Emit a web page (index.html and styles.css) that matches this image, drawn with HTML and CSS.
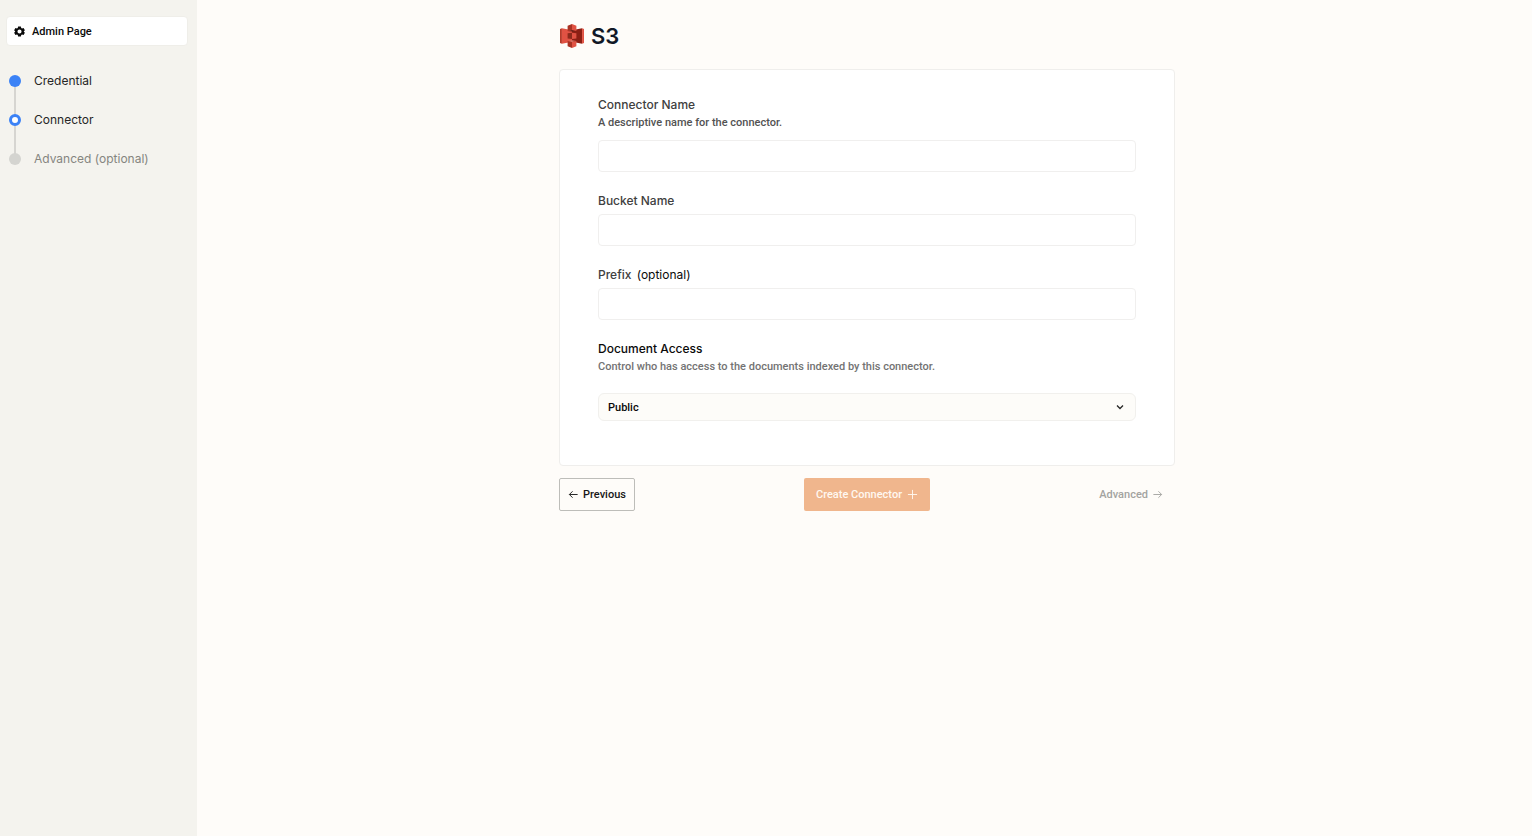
FILE: index.html
```html
<!DOCTYPE html>
<html lang="en">
<head>
<meta charset="utf-8">
<meta name="viewport" content="width=device-width, initial-scale=1">
<title>S3 Connector</title>
<link rel="stylesheet" href="styles.css">
</head>
<body class="page">
<aside class="sidebar">
  <a class="admin-link" href="#">
    <svg class="gear" viewBox="0 0 24 24" aria-hidden="true"><path fill="currentColor" fill-rule="evenodd" d="M9 1h6l.8 3.400 1.700 1 3.400-1 2.800 5-2.500 2.400v.4l2.500 2.400-2.800 5-3.400-1-1.700 1L15 23H9l-.8-3.400-1.700-1-3.400 1-2.800-5 2.500-2.400v-.4L.3 9.400l2.800-5 3.400 1 1.700-1zM12 7.500a4.500 4.500 0 1 0 0 9 4.500 4.500 0 0 0 0-9z"/></svg>
    <span>Admin Page</span>
  </a>
  <ol class="steps">
    <li class="step"><span class="dot dot-done"></span><span>Credential</span></li>
    <li class="step" aria-current="step"><span class="dot dot-current"></span><span>Connector</span></li>
    <li class="step step-muted"><span class="dot"></span><span>Advanced (optional)</span></li>
  </ol>
</aside>
<main class="main">
  <form class="content">
    <header class="heading">
      <svg class="logo" viewBox="0 0 256 310" preserveAspectRatio="none" aria-hidden="true">
        <path fill="#b53a2a" d="M20.600 53.700 0 64v181l20.600 10.300z"/>
        <path fill="#e05243" d="M131 229 20.600 255.300V53.700L131 79.400z"/>
        <path fill="#8c1f14" d="m128 229.300 107.400 26V53.700L128 79.700z"/>
        <path fill="#e05243" d="m235.400 255.300 20.600-10.300V64l-20.600-10.300z"/>
        <path fill="#8c2a1c" d="m81.200 187.900 46.800 6v-79.300l-46.800 5.900z"/>
        <path fill="#e05243" d="m174.800 187.900-46.800 6v-79.300l46.800 5.900z"/>
        <path fill="#5e1f18" d="M174.800 89.600 128 98.200l-46.800-8.600L128 77.400z"/>
        <path fill="#d9796c" d="M174.800 219.800 128 211.200l-46.800 8.600 46.800 13z"/>
        <path fill="#a83223" d="M81.200 89.600 128 78V0L81.200 23.400z"/>
        <path fill="#e05243" d="M174.800 89.600 128 78V0l46.800 23.400z"/>
        <path fill="#a83223" d="M128 309.400 81.200 286v-66.200l46.800 11.600z"/>
        <path fill="#e05243" d="m128 309.400 46.800-23.400v-66.200L128 231.400z"/>
      </svg>
      <h1 class="title">S3</h1>
    </header>
    <section class="card">
      <div class="field">
        <label class="label" for="name">Connector Name</label>
        <p class="help" id="name-help">A descriptive name for the connector.</p>
        <input class="input input-spaced" id="name" type="text" aria-describedby="name-help">
      </div>
      <div class="field">
        <label class="label" for="bucket">Bucket Name</label>
        <input class="input" id="bucket" type="text">
      </div>
      <div class="field">
        <label class="label" for="prefix">Prefix <span class="optional">(optional)</span></label>
        <input class="input" id="prefix" type="text">
      </div>
      <div class="field">
        <label class="label label-strong" for="access">Document Access</label>
        <p class="help help-light" id="access-help">Control who has access to the documents indexed by this connector.</p>
        <div class="select-wrap">
          <select class="select" id="access" aria-describedby="access-help"><option>Public</option></select>
          <svg class="chevron" viewBox="0 0 12 12" aria-hidden="true"><path d="m3 4.500 3 3 3-3"/></svg>
        </div>
      </div>
    </section>
    <nav class="actions">
      <button class="button button-previous" type="button">
        <svg class="icon" viewBox="0 0 12 12" aria-hidden="true"><path d="M10.500 6h-9M5 2.500 1.500 6 5 9.500"/></svg>
        <span>Previous</span>
      </button>
      <button class="button button-create" type="submit" disabled>
        <span>Create Connector</span>
        <svg class="icon" viewBox="0 0 12 12" aria-hidden="true"><path d="M6 1v10M1 6h10"/></svg>
      </button>
      <button class="button button-advanced" type="button" disabled>
        <span>Advanced</span>
        <svg class="icon" viewBox="0 0 12 12" aria-hidden="true"><path d="M1.500 6h9M7 2.500 10.500 6 7 9.500"/></svg>
      </button>
    </nav>
  </form>
</main>
</body>
</html>
```
FILE: styles.css
```css
*, *::before, *::after { box-sizing: border-box; }

.page {
  display: flex;
  min-height: 100vh;
  margin: 0;
  background: #fefcf9;
  color: #0a0a0a;
  font-family: "Roboto", "Liberation Sans", sans-serif;
  font-size: 11px;
  font-weight: 500;
}

.sidebar {
  flex: none;
  width: 197px;
  padding: 16px 9px 16px 6px;
  background: #f4f3ee;
}

.admin-link {
  display: flex;
  align-items: center;
  gap: 7px;
  height: 30px;
  padding: 0 7px;
  border: 1px solid #efeee9;
  border-radius: 4px;
  background: #fff;
  color: #0a0a0a;
  text-decoration: none;
}

.gear { width: 11px; height: 11px; }

.steps {
  display: grid;
  gap: 19px;
  margin: 25px 0 0;
  padding: 0 0 0 3px;
  list-style: none;
}

.step {
  position: relative;
  display: flex;
  align-items: center;
  gap: 13px;
  color: #262626;
  font-family: "Inter", "Liberation Sans", sans-serif;
  font-size: 12px;
  font-weight: 400;
  line-height: 20px;
}

.step-muted { color: #858580; }

.step:not(:last-child)::before {
  content: "";
  position: absolute;
  top: 10px;
  left: 5px;
  width: 2px;
  height: 39px;
  background: #d6d5d1;
}

.dot {
  position: relative;
  width: 12px;
  height: 12px;
  border-radius: 50%;
  background: #d4d4d0;
}

.dot-done { background: #3b82f6; }
.dot-current { border: 3px solid #3b82f6; background: #fff; }

.main {
  flex: 1;
  min-width: 0;
  padding: 20px 0 20px 5px;
}

.content {
  width: 100%;
  max-width: 616px;
  margin: 0 auto;
}

.heading {
  display: flex;
  align-items: center;
  gap: 7px;
  height: 31px;
  margin-bottom: 18px;
  padding-left: 1px;
}

.logo { width: 24px; height: 24px; }

.title {
  margin: 0;
  color: #111827;
  font-family: "Inter", "Liberation Sans", sans-serif;
  font-size: 22px;
  font-weight: 600;
  line-height: 30px;
}

.card {
  display: grid;
  gap: 20px;
  padding: 26px 38px 44px;
  border: 1px solid #efeeec;
  border-radius: 4px;
  background: #fff;
}

.field { display: flex; flex-direction: column; }

.label {
  color: #404040;
  font-family: "Inter", "Liberation Sans", sans-serif;
  font-size: 12px;
  font-weight: 500;
  line-height: 18px;
}

.optional {
  margin-left: 2px;
  color: #0a0a0a;
  font-weight: 400;
}

.label-strong { color: #0a0a0a; }

.help {
  margin: 0;
  color: #525252;
  font-size: 11px;
  line-height: 17px;
}

.help-light { color: #737373; }

.input {
  width: 100%;
  height: 32px;
  margin-top: 4px;
  padding: 0 10px;
  border: 1px solid #f0efee;
  border-radius: 4px;
  background: #fff;
  font: inherit;
}

.input-spaced { margin-top: 9px; }

.select-wrap {
  position: relative;
  margin-top: 18px;
}

.select {
  display: block;
  width: 100%;
  height: 28px;
  padding: 0 9px;
  border: 1px solid #f1f0ed;
  border-radius: 6px;
  background: #fdfcf9;
  color: #0a0a0a;
  font: inherit;
  appearance: none;
}

.chevron {
  position: absolute;
  top: 8px;
  right: 10px;
  width: 12px;
  height: 12px;
  fill: none;
  stroke: #262626;
  stroke-width: 1.3;
  pointer-events: none;
}

.actions {
  display: grid;
  grid-template-columns: 1fr auto 1fr;
  margin-top: 12px;
}

.button {
  display: flex;
  align-items: center;
  gap: 4px;
  height: 33px;
  padding: 0 8px;
  border: 1px solid transparent;
  border-radius: 2px;
  background: transparent;
  font: inherit;
}

.icon {
  width: 11px;
  height: 11px;
  fill: none;
  stroke: currentColor;
}

.button-previous {
  justify-self: start;
  border-color: #bdbdb9;
  color: #171717;
}

.button-create {
  gap: 5px;
  padding: 0 11px;
  background: #f0b68d;
  color: #fff8f1;
}

.button-advanced {
  justify-self: end;
  padding: 0 11px;
  color: #a3a3a0;
}
```
